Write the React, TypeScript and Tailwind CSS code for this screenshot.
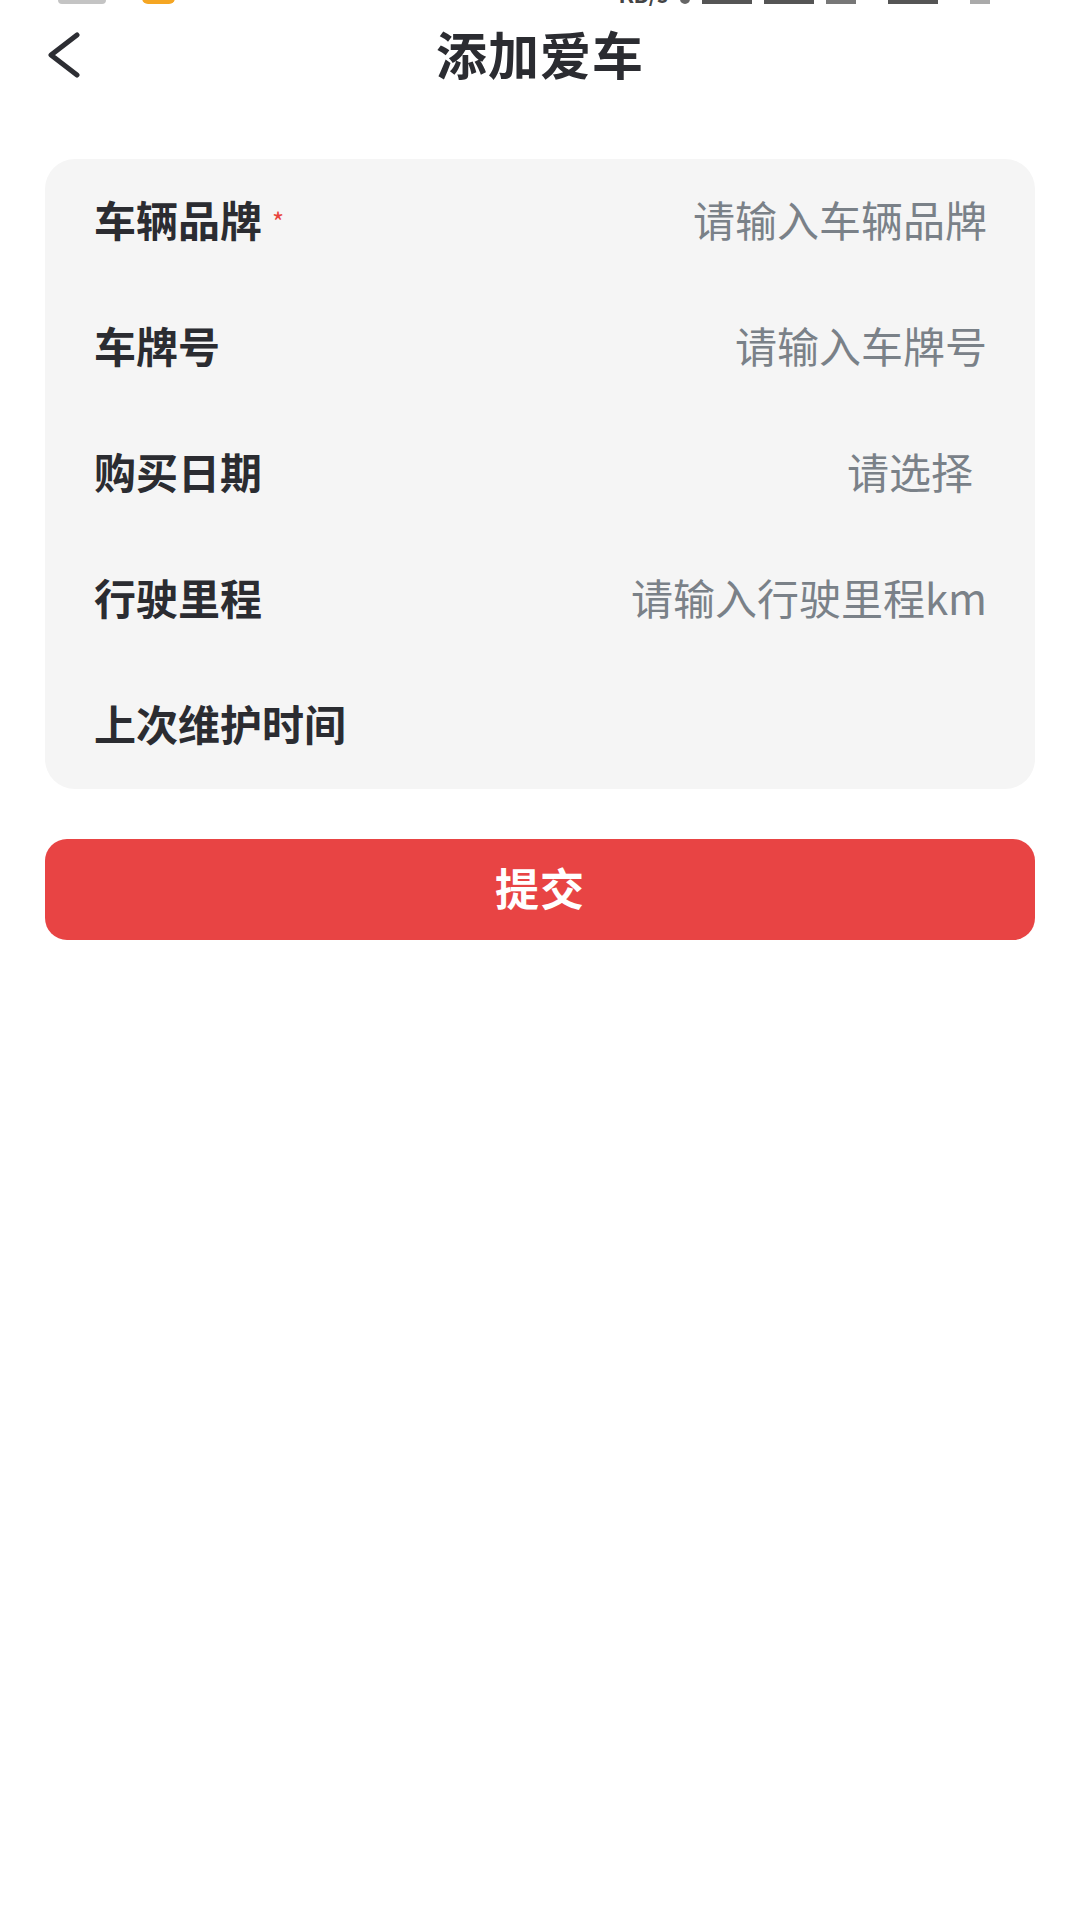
const font = { fontFamily: '"Noto Sans CJK SC", "Noto Sans", sans-serif' };

type Field = { label: string; placeholder?: string; required?: boolean; select?: boolean };

const fields: Field[] = [
  { label: "车辆品牌", placeholder: "请输入车辆品牌", required: true },
  { label: "车牌号", placeholder: "请输入车牌号" },
  { label: "购买日期", placeholder: "请选择", select: true },
  { label: "行驶里程", placeholder: "请输入行驶里程km" },
  { label: "上次维护时间" },
];

function StatusBar() {
  // only the bottom few pixels of the system bar are in frame
  return (
    <div className="h-[6px] overflow-hidden">
      <div className="-mt-[12px] flex items-end justify-between pl-[58px] pr-[90px] h-[16px]">
        <div className="flex items-end gap-[36px]">
          <div className="w-[48px] h-[10px] rounded-[4px] bg-[#c4c4c4]" />
          <div className="w-[33px] h-[15px] rounded-[6px] bg-[#f5a623]" />
        </div>
        <div className="flex items-end gap-[12px]">
          <span className="text-[22px] leading-none font-bold text-[#444]">KB/s</span>
          <div className="w-[10px] h-[10px] rounded-full bg-[#666]" />
          <div className="w-[50px] h-[8px] bg-[#555]" />
          <div className="w-[50px] h-[8px] bg-[#555]" />
          <div className="w-[30px] h-[8px] bg-[#777]" />
          <div className="ml-[20px] w-[50px] h-[6px] bg-[#555]" />
          <div className="ml-[20px] w-[20px] h-[6px] bg-[#aaa]" />
        </div>
      </div>
    </div>
  );
}

export default function App() {
  return (
    <div className="w-[1080px] h-[1920px] bg-white" style={font}>
      <StatusBar />

      <header className="relative h-[99px] flex items-center justify-center pb-[5px]">
        <button className="absolute left-[46px] top-[26px] w-[36px] h-[46px] flex items-center justify-center">
          <svg width="36" height="46" viewBox="0 0 36 46" fill="none">
            <path d="M31 3 L5 23 L31 43" stroke="#2d2e33" strokeWidth="5" strokeLinecap="round" strokeLinejoin="round" />
          </svg>
        </button>
        <h1 className="text-[51px] leading-none font-bold text-[#2b2c31] tracking-[1px]">添加爱车</h1>
      </header>

      <div className="mx-[45px] mt-[54px] rounded-[30px] bg-[#f5f5f5] flex flex-col">
        {fields.map((f) => (
          <div key={f.label} className="h-[126px] flex items-center justify-between pl-[49px] pr-[48px] pb-[7px]">
            <div className="flex items-center">
              <span className="text-[42px] leading-none font-bold text-[#2b2c31]">{f.label}</span>
              {f.required && <span className="ml-[10px] mt-[4px] text-[26px] leading-none text-[#e8453c]">*</span>}
            </div>
            {f.placeholder && (
              <span className={`text-[42px] leading-none text-[#7a8188] ${f.select ? "pr-[14px]" : ""}`}>
                {f.placeholder}
              </span>
            )}
          </div>
        ))}
      </div>

      <div className="px-[45px] mt-[50px]">
        <button className="w-full h-[101px] rounded-[22px] bg-[#e84444] flex items-center justify-center pb-[6px]">
          <span className="text-[44px] leading-none font-bold text-white tracking-[1px]">提交</span>
        </button>
      </div>
    </div>
  );
}
